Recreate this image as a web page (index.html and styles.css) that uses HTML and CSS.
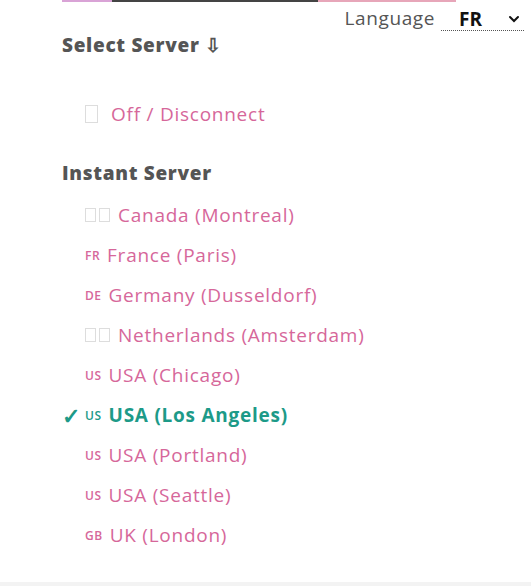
FILE: index.html
```html
<!DOCTYPE html>
<html lang="en">
<head>
    <meta charset="UTF-8">
    <meta name="viewport" content="width=device-width, initial-scale=1.0">
    <title>Select Server</title>
    <link rel="stylesheet" href="styles.css">
</head>
<body>
    <div class="topline"></div>

    <div class="lang-row">
        <span class="lang-label">Language</span>
        <div class="lang-select">
            <span>FR</span>
            <svg width="12" height="8" viewBox="0 0 12 8"><path d="M2 2 L6 6 L10 2" fill="none" stroke="#111" stroke-width="2" stroke-linecap="round"/></svg>
        </div>
    </div>

    <div class="panel">
        <h2 class="title">Select Server ⇩</h2>

        <div class="row off">
            <span class="tofu big"></span>
            <span>Off / Disconnect</span>
        </div>

        <h2 class="title instant">Instant Server</h2>

        <div class="servers">
            <div class="row"><span class="tofu"></span><span class="tofu"></span><span class="name">Canada (Montreal)</span></div>
            <div class="row"><span class="flag">FR</span><span class="name">France (Paris)</span></div>
            <div class="row"><span class="flag">DE</span><span class="name">Germany (Dusseldorf)</span></div>
            <div class="row"><span class="tofu"></span><span class="tofu"></span><span class="name">Netherlands (Amsterdam)</span></div>
            <div class="row"><span class="flag">US</span><span class="name">USA (Chicago)</span></div>
            <div class="row active"><span class="check">✓</span><span class="flag">US</span><span class="name">USA (Los Angeles)</span></div>
            <div class="row"><span class="flag">US</span><span class="name">USA (Portland)</span></div>
            <div class="row"><span class="flag">US</span><span class="name">USA (Seattle)</span></div>
            <div class="row"><span class="flag">GB</span><span class="name">UK (London)</span></div>
        </div>
    </div>

    <div class="footer"></div>
</body>
</html>
```

FILE: styles.css
```css
body {
    margin: 0;
    font-family: "Open Sans", Lato, sans-serif;
    background: #fff;
    color: #555;
}
.topline {
    height: 2px;
    margin: 0 75px 0 62px;
    background: linear-gradient(to right, #d9a3d6 0, #d9a3d6 50px, #444 50px, #444 256px, #e7a6b9 256px);
}
.lang-row {
    height: 31px;
    display: flex;
    justify-content: flex-end;
    align-items: center;
    padding-right: 7px;
}
.lang-label {
    font-size: 19px;
    letter-spacing: 0.6px;
    color: #555;
    margin-right: 6px;
}
.lang-select {
    width: 83px;
    height: 24px;
    box-sizing: border-box;
    display: flex;
    justify-content: space-between;
    align-items: center;
    padding: 0 4px 0 18px;
    border-bottom: 1px dotted #555;
    font-size: 19px;
    font-weight: 700;
    color: #111;
    margin-top: 3px;
}
.panel {
    padding-left: 62px;
}
.title {
    margin: 0;
    font-size: 19px;
    line-height: 24px;
    font-weight: 800;
    letter-spacing: 0.7px;
    color: #555;
}
.instant {
    margin-top: 27px;
}
.row {
    height: 40px;
    display: flex;
    align-items: center;
    padding-left: 23px;
    color: #d6679a;
    font-size: 19px;
    letter-spacing: 0.75px;
    position: relative;
}
.off {
    margin-top: 37px;
}
.servers {
    margin-top: 10px;
}
.flag {
    font-size: 12px;
    font-weight: 600;
    margin-right: 7px;
    letter-spacing: 0.5px;
}
.tofu {
    width: 9px;
    height: 12px;
    border: 1px solid #ddd;
    margin-right: 3px;
}
.tofu + .tofu {
    margin-right: 8px;
}
.tofu.big {
    width: 11px;
    height: 16px;
    margin-right: 13px;
}
.active {
    color: #1d9a88;
    font-weight: 700;
}
.check {
    position: absolute;
    left: 0;
    font-size: 22px;
    font-weight: 700;
}
.footer {
    margin-top: 27px;
    height: 10px;
    background: #f3f3f3;
}
```
